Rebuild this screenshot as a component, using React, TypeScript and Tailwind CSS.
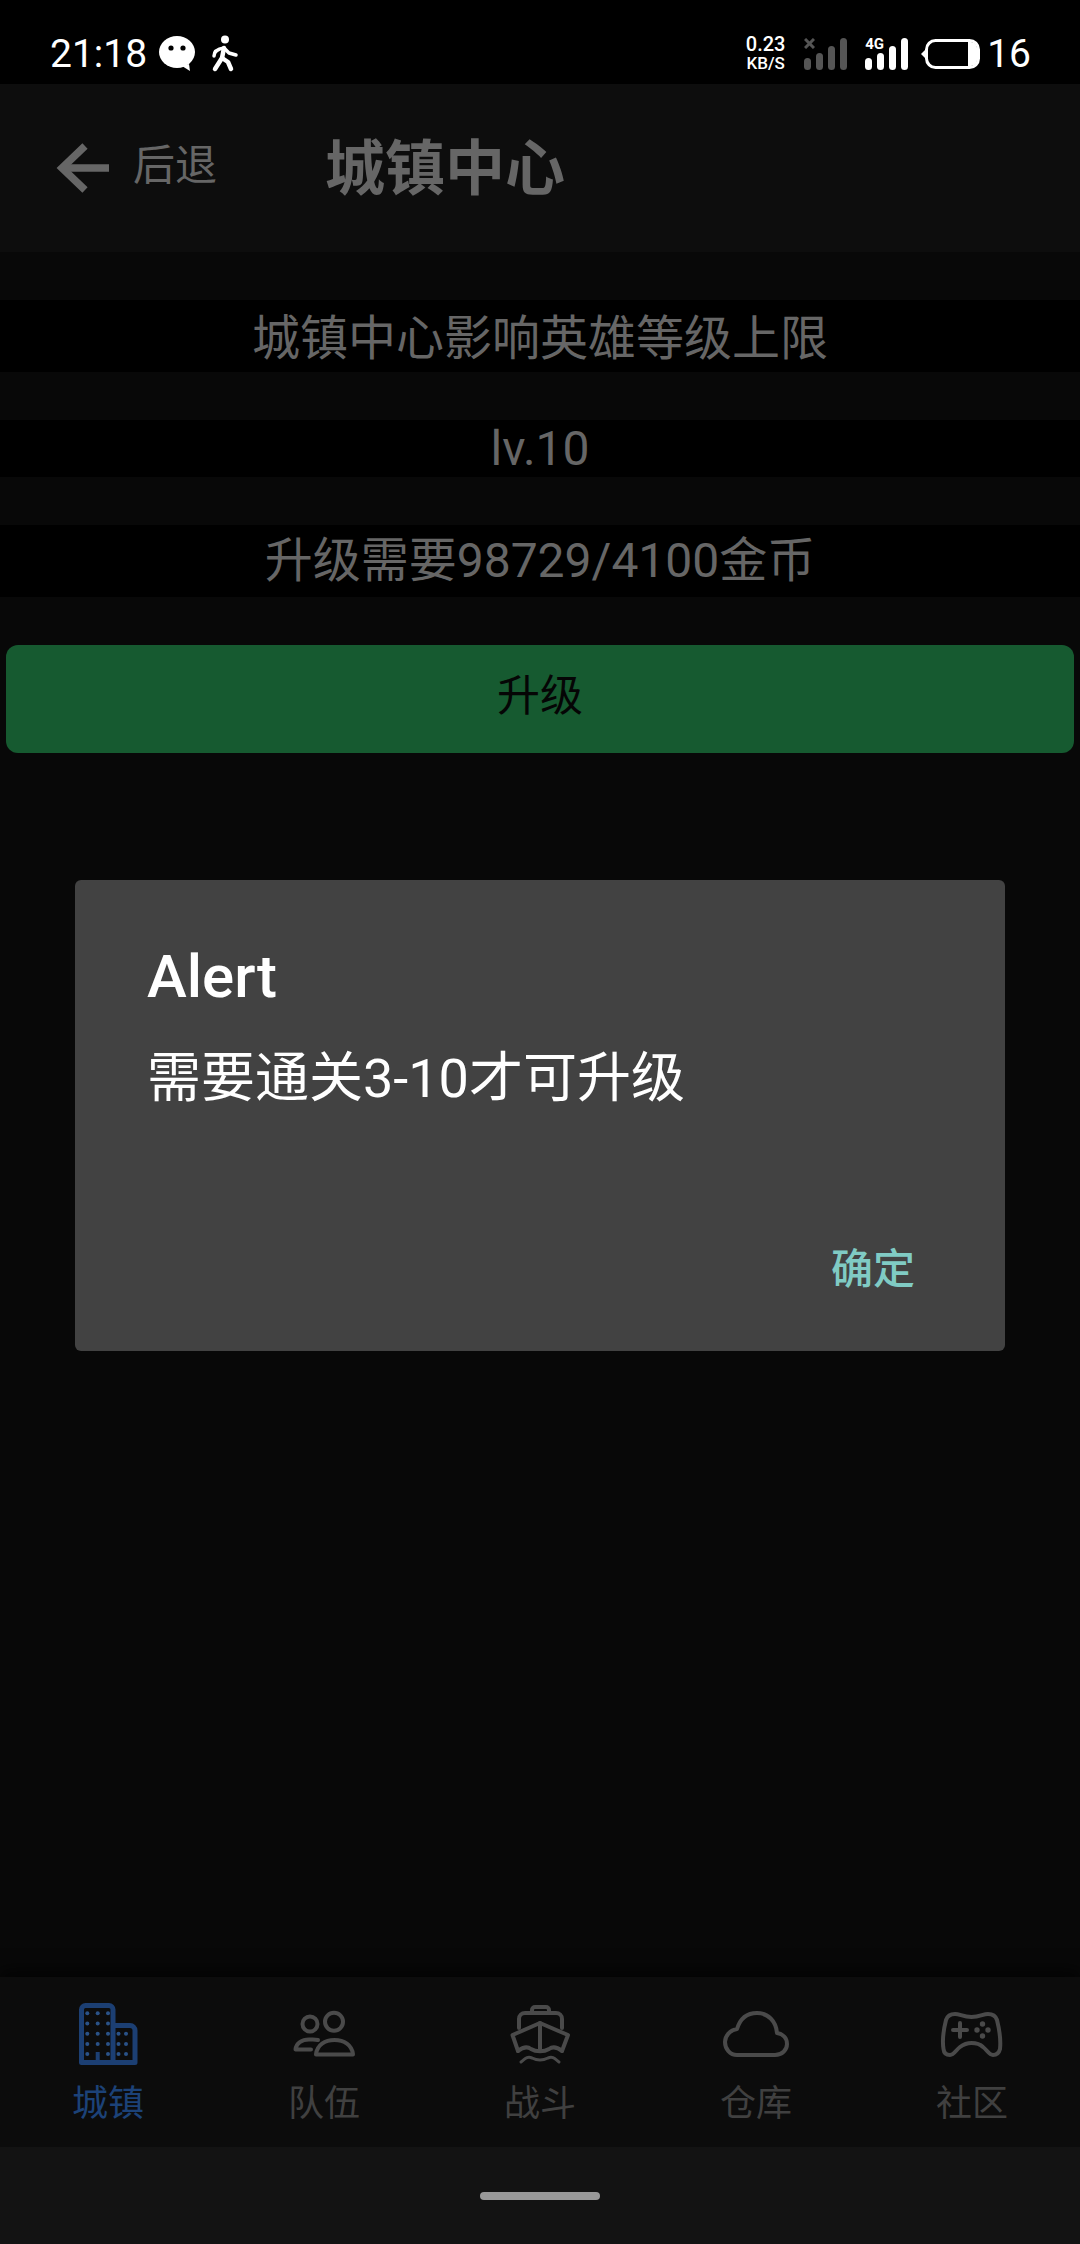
const dim = "#4a4a4a";

function Bars({ color }: { color: string }) {
  // four signal bars, shortest first
  const tops = [20, 15, 8, 0];
  return (
    <svg width="44" height="32" viewBox="0 0 44 32" fill={color}>
      {tops.map((t, i) => (
        <rect key={i} x={i * 12} y={t} width="7" height={32 - t} rx="3.5" />
      ))}
    </svg>
  );
}

function WechatIcon() {
  return (
    <svg width="40" height="38" viewBox="0 0 40 38" className="mr-[13px]">
      <ellipse cx="19" cy="17" rx="18" ry="16" fill="white" />
      <path d="M24 31 L32 36 L31 29 Z" fill="white" />
      <circle cx="13" cy="13" r="2.6" fill="black" />
      <circle cx="25" cy="13" r="2.6" fill="black" />
    </svg>
  );
}

function WalkIcon() {
  return (
    <svg width="30" height="38" viewBox="0 0 30 38" fill="none" stroke="white" strokeWidth="4.5" strokeLinecap="round" strokeLinejoin="round">
      <circle cx="14" cy="4.5" r="4" fill="white" stroke="none" />
      <path d="M3 21 C3 17 6 14 13 13 L18 18 L25 20" strokeWidth="3.5" />
      <path d="M13 13 L11 23 L4 34" />
      <path d="M11 23 L17 27 L20 34" />
    </svg>
  );
}

function Battery() {
  return (
    <svg width="60" height="30" viewBox="0 0 60 30">
      <path d="M0 15 L4 11 V19 Z" fill="white" />
      <rect x="5.5" y="1.5" width="52" height="27" rx="9" fill="none" stroke="white" strokeWidth="3" />
      <path d="M47 3 H50 C53 3 56 6 56 9 V21 C56 24 53 27 50 27 H47 Z" fill="white" />
    </svg>
  );
}

function StatusBar() {
  return (
    <div className="h-[84px] bg-black flex items-center justify-between pt-[24px] pl-[50px] pr-[49px] text-white shrink-0">
      <div className="flex items-center">
        <span className="text-[39px] leading-[40px] mr-[11px]">21:18</span>
        <WechatIcon />
        <WalkIcon />
      </div>
      <div className="flex items-center">
        <div className="w-[41px] mr-[18px] flex flex-col items-center font-medium">
          <span className="text-[20px] leading-[19px]">0.23</span>
          <span className="text-[17px] leading-[19px]">KB/S</span>
        </div>
        <div className="relative mr-[17px]">
          <Bars color="#555555" />
          <svg width="11" height="11" viewBox="0 0 11 11" stroke="#555555" strokeWidth="3" className="absolute left-0 top-0">
            <path d="M1 1 L10 10 M10 1 L1 10" />
          </svg>
        </div>
        <div className="relative mr-[12px]">
          <Bars color="white" />
          <span className="absolute left-0 top-[-1px] text-[15px] leading-[14px] font-bold">4G</span>
        </div>
        <div className="mr-[6px]">
          <Battery />
        </div>
        <span className="text-[39px] leading-[40px]">16</span>
      </div>
    </div>
  );
}

function Header() {
  return (
    <div className="h-[168px] bg-[#0d0d0d] flex items-center text-[#666666] shrink-0">
      <svg width="56" height="54" viewBox="0 0 56 54" fill="none" stroke="#666666" strokeWidth="7.5" className="ml-[56px]">
        <path d="M53 27 H7" />
        <path d="M29 5 L6 27 L29 49" />
      </svg>
      <span className="ml-[21px] text-[42px] leading-[56px] mb-[4px]">后退</span>
      <span className="ml-[108px] text-[60px] leading-[80px] font-bold mt-[4px]">城镇中心</span>
    </div>
  );
}

function BuildingIcon() {
  const rows = [23.3, 33.5, 43.7, 54, 64];
  const cols = [27.3, 37.7, 48];
  return (
    <svg width="100" height="90" viewBox="-2 0 100 90" fill="none">
      <g stroke="#1c3f73" strokeWidth="5" strokeLinejoin="round">
        <path d="M21.5 72.5 V19.5 a4 4 0 0 1 4-4 H49 a4 4 0 0 1 4 4 V72.5 Z" />
        <path d="M53 35.5 H70 a5 5 0 0 1 5 5 V72.5 H53" />
        <path d="M37.7 62 V72" strokeWidth="4" />
      </g>
      <g fill="#2a5288">
        {rows.map((y) =>
          cols.map((x) => (x === 37.7 && y === 64 ? null : <circle key={`${x}-${y}`} cx={x} cy={y} r="2" />)),
        )}
        {rows.slice(2).map((y) =>
          [58.5, 66].map((x) => <circle key={`${x}-${y}`} cx={x} cy={y} r="2" />),
        )}
      </g>
    </svg>
  );
}

function TeamIcon() {
  return (
    <svg width="100" height="90" viewBox="-6 0 100 90" fill="none" stroke={dim} strokeWidth="4" strokeLinejoin="round" strokeLinecap="round">
      <circle cx="30" cy="34" r="7.5" />
      <circle cx="54" cy="31.7" r="9" />
      <path d="M36 64.5 C37 55 45 50 54.5 50 C64 50 72 55 73 64.5 Z" />
      <path d="M38 50 C34 49 32 49.5 29 49.5 C22 49.5 16 53 15.5 59.5 H31" />
    </svg>
  );
}

function ShipIcon() {
  return (
    <svg width="100" height="90" viewBox="0 0 100 90" fill="none" stroke={dim} strokeWidth="4" strokeLinejoin="round" strokeLinecap="round">
      <path d="M42 23 V20 a3 3 0 0 1 3-3 H56 a3 3 0 0 1 3 3 V23" />
      <path d="M29 38 V29 a6 6 0 0 1 6-6 H66 a6 6 0 0 1 6 6 V38" />
      <path d="M28 61 L22.5 45 L50 33 L78 45 L72 61" />
      <path d="M50 33 V61" />
      <path d="M28 61 C33 57 37 56 41 59 C46 62 54 62 59 59 C63 56 67 57 72 61" />
      <path d="M31 72 C35 69 37 66 42 68 C47 70.5 53 70.5 58 68 C63 66 65 69 69 72" strokeWidth="3" />
    </svg>
  );
}

function CloudIcon() {
  return (
    <svg width="100" height="90" viewBox="-17 -21 100 90" fill="none" stroke={dim} strokeWidth="4" strokeLinejoin="round">
      <path d="M14 44 H52 C59 44 64 39 64 33 C64 27 60 23 54 22 C53 10 45 2 34 2 C24 2 17 8 14 18 C7 19 2 25 2 31 C2 38 7 44 14 44 Z" />
    </svg>
  );
}

function GamepadIcon() {
  return (
    <svg width="100" height="90" viewBox="2 0 100 90" fill="none" stroke={dim} strokeWidth="4" strokeLinejoin="round" strokeLinecap="round">
      <path d="M35 24 C29 24 27 27 26 30 C24 38 22 50 23.5 59 C24 64 27 65 30 65 C34 65 36 60 40 57 C44 54 47 53 51.5 53 C56 53 60 54 63 57 C67 60 69 65 73 65 C77 65 79 63 80 59 C81 50 79 38 77 30 C76 27 73 24 68 24 C63 24 60 27 51.5 27 C43 27 40 24 35 24 Z" />
      <path d="M33 40 H47 M40 33 V47" />
      <g fill={dim} stroke="none">
        <circle cx="57" cy="40" r="2.7" />
        <circle cx="62.5" cy="34" r="2.7" />
        <circle cx="68" cy="40" r="2.7" />
        <circle cx="62.5" cy="46" r="2.7" />
      </g>
    </svg>
  );
}

const tabs = [
  { label: "城镇", icon: <BuildingIcon />, active: true },
  { label: "队伍", icon: <TeamIcon /> },
  { label: "战斗", icon: <ShipIcon /> },
  { label: "仓库", icon: <CloudIcon /> },
  { label: "社区", icon: <GamepadIcon /> },
];

function TabBar() {
  return (
    <div className="h-[170px] bg-[#0c0c0c] grid grid-cols-5 pt-[13px] shrink-0 shadow-[0_-8px_14px_rgba(0,0,0,0.6)]">
      {tabs.map((tab) => (
        <div key={tab.label} className="flex flex-col items-center">
          {tab.icon}
          <span className={`text-[36px] leading-[42px] mt-[3px] ${tab.active ? "text-[#1c4278]" : "text-[#404040]"}`}>
            {tab.label}
          </span>
        </div>
      ))}
    </div>
  );
}

function AlertDialog() {
  return (
    <div className="absolute left-[75px] top-[880px] w-[930px] h-[471px] bg-[#424242] rounded-[6px] flex flex-col pt-[61px] pl-[72px]">
      <div className="text-white text-[60px] leading-[72px] font-medium">Alert</div>
      <div className="text-white text-[54px] leading-[72px] mt-[30px]">需要通关3-10才可升级</div>
      <div className="mt-auto mb-[51px] mr-[90px] flex justify-end">
        <span className="text-[#80cbc4] text-[42px] leading-[60px] font-medium">确定</span>
      </div>
    </div>
  );
}

export default function App() {
  return (
    <div className="relative w-[1080px] h-[2244px] overflow-hidden bg-[#080808] flex flex-col font-[Roboto,'Noto_Sans_CJK_SC',sans-serif]">
      <StatusBar />
      <Header />

      <div className="flex-1 flex flex-col items-stretch pt-[48px] text-[#666666] text-[48px] text-center">
        <div className="h-[72px] leading-[72px] pt-[3px] bg-black">城镇中心影响英雄等级上限</div>
        <div className="h-[57px] leading-[57px] bg-black mt-[48px]">lv.10</div>
        <div className="h-[72px] leading-[72px] bg-black mt-[48px]">升级需要98729/4100金币</div>
        <button className="h-[108px] mt-[48px] mx-[6px] pb-[5px] rounded-[12px] bg-[#165a30] text-[#050505] text-[43px]">升级</button>
      </div>

      <TabBar />
      <div className="h-[97px] bg-[#131313] flex justify-center pt-[45px] shrink-0">
        <div className="w-[120px] h-[8px] rounded-full bg-[#999999]" />
      </div>

      <AlertDialog />
    </div>
  );
}
